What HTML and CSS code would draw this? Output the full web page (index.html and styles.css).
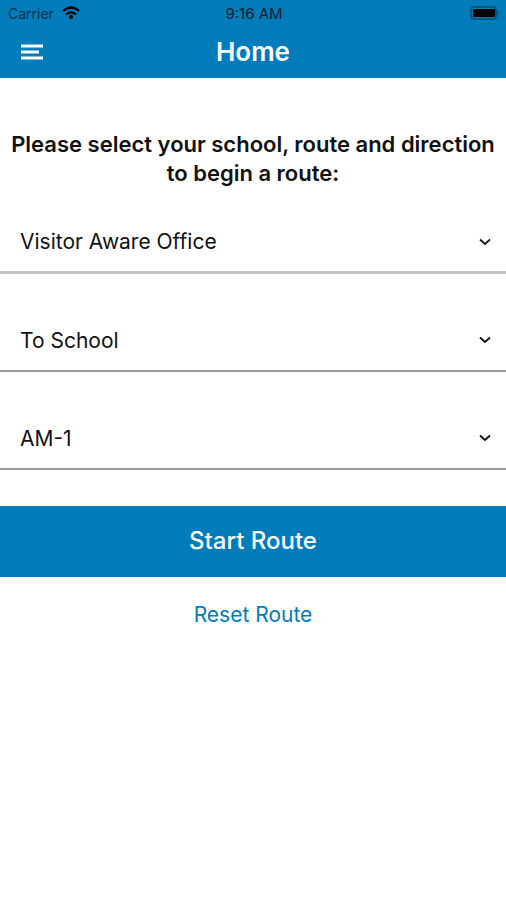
FILE: index.html
```html
<!DOCTYPE html>
<html lang="en">
<head>
<meta charset="utf-8">
<meta name="viewport" content="width=device-width, initial-scale=1">
<title>Home</title>
<link rel="stylesheet" href="styles.css">
</head>
<body>
<header class="top">
  <div class="status">
    <span class="carrier">Carrier
      <svg class="wifi" viewBox="0 0 18 14" aria-hidden="true"><path d="M1 5Q9-2 17 5M4 8.500Q9 4 14 8.500" fill="none" stroke="currentColor" stroke-width="2.200"/><circle cx="9" cy="11" r="2" fill="currentColor"/></svg>
    </span>
    <span class="time">9:16 AM</span>
    <svg class="battery" viewBox="0 0 30 14" aria-hidden="true"><rect x="1" y="1" width="25" height="12" rx="3" fill="none" stroke="#04567f" stroke-width="2"/><rect x="3" y="3" width="22" height="8" rx="1" fill="currentColor"/><path d="M27 4Q31 7 27 10Z" fill="#04567f"/></svg>
  </div>
  <div class="nav">
    <button class="menu" type="button" aria-label="Menu">
      <svg viewBox="0 0 24 18" aria-hidden="true"><path d="M1 3H23M1 9H19M1 15H23" stroke="currentColor" stroke-width="3"/></svg>
    </button>
    <h1>Home</h1>
  </div>
</header>
<main>
  <h2>Please select your school, route and direction to begin a route:</h2>
  <form>
    <div class="field school">
      <select aria-label="School"><option>Visitor Aware Office</option></select>
      <svg class="chevron" viewBox="0 0 12 8" aria-hidden="true"><path d="M1 1.500L6 6L11 1.500" fill="none" stroke="currentColor" stroke-width="1.800"/></svg>
    </div>
    <div class="field">
      <select aria-label="Direction"><option>To School</option></select>
      <svg class="chevron" viewBox="0 0 12 8" aria-hidden="true"><path d="M1 1.500L6 6L11 1.500" fill="none" stroke="currentColor" stroke-width="1.800"/></svg>
    </div>
    <div class="field">
      <select aria-label="Route"><option>AM-1</option></select>
      <svg class="chevron" viewBox="0 0 12 8" aria-hidden="true"><path d="M1 1.500L6 6L11 1.500" fill="none" stroke="currentColor" stroke-width="1.800"/></svg>
    </div>
    <button class="start" type="button">Start Route</button>
    <button class="reset" type="reset">Reset Route</button>
  </form>
</main>
</body>
</html>
```
FILE: styles.css
```css
* { box-sizing: border-box; }
body { margin: 0; background: #fff; color: #111; font-family: Inter, "Liberation Sans", sans-serif; }
button, select { font: inherit; color: inherit; border: 0; background: none; margin: 0; padding: 0; }
.top { background: #007cbb; }
.status { display: grid; grid-template-columns: 1fr auto 1fr; align-items: center; height: 26px; padding: 0 6px 0 8px; font-size: 14px; color: #06304a; }
.carrier { display: flex; align-items: center; gap: 8px; }
.time { font-size: 15px; color: #041e2e; }
.wifi { width: 18px; height: 14px; color: #000; }
.battery { width: 30px; height: 14px; justify-self: end; color: #000; }
.nav { display: grid; grid-template-columns: 24px 1fr 24px; align-items: center; height: 52px; padding: 0 20px; color: #fff; }
.menu { display: flex; }
.menu svg { width: 24px; height: 18px; }
h1 { margin: 0; font-size: 26px; font-weight: 600; line-height: 32px; text-align: center; }
h2 { margin: 0; padding: 52px 8px 0; font-size: 22px; font-weight: 600; line-height: 29px; text-align: center; }
form { display: flex; flex-direction: column; padding-top: 24px; }
.field { display: grid; grid-template-columns: 1fr auto; align-items: center; height: 62px; margin-bottom: 36px; border-bottom: 2px solid #999; padding-right: 15px; }
.school { border-bottom-color: #c4c4c4; border-bottom-width: 3px; }
.field select { appearance: none; width: 100%; height: 58px; padding-left: 20px; font-size: 21px; outline: 0; }
.chevron { width: 12px; height: 8px; }
.start { height: 71px; padding-bottom: 3px; background: #007cbb; color: #fff; font-size: 24px; font-weight: 500; }
.reset { align-self: center; margin-top: 22px; color: #007cbb; font-size: 21px; line-height: 32px; }
```
